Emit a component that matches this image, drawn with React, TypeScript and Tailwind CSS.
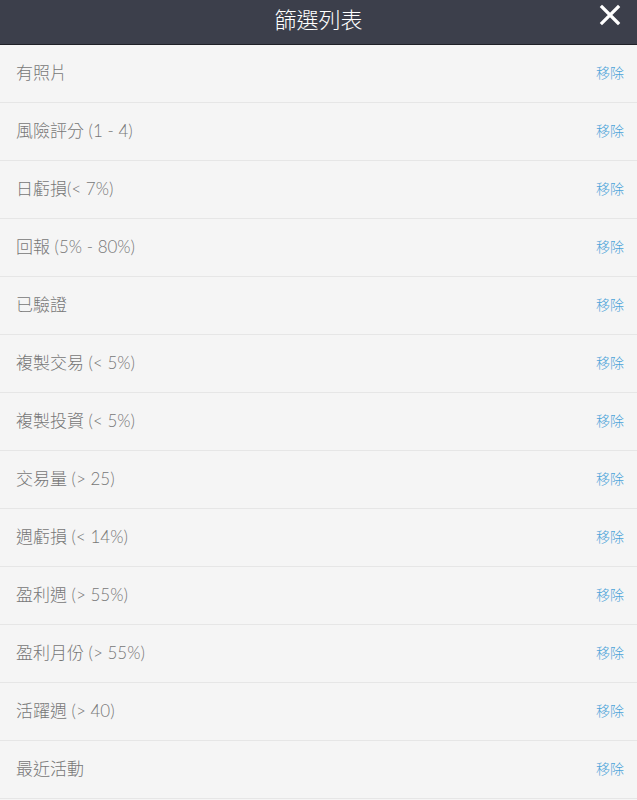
const filters = [
  '有照片',
  '風險評分 (1 - 4)',
  '日虧損(< 7%)',
  '回報 (5% - 80%)',
  '已驗證',
  '複製交易 (< 5%)',
  '複製投資 (< 5%)',
  '交易量 (> 25)',
  '週虧損 (< 14%)',
  '盈利週 (> 55%)',
  '盈利月份 (> 55%)',
  '活躍週 (> 40)',
  '最近活動',
]

export default function App() {
  return (
    <div
      className="w-[637px] h-[800px] overflow-hidden bg-[#f5f5f5] font-light"
      style={{ fontFamily: 'Lato, "Noto Sans CJK TC", sans-serif' }}
    >
      <div className="relative h-[45px] bg-[#3c3f4b] border-b border-[#1f2027] flex items-center justify-center">
        <h1 className="text-[22px] text-white font-light leading-none -mt-[4px]">篩選列表</h1>
        <button className="absolute right-[16px] top-[4px] w-[22px] h-[22px] text-white">
          <svg viewBox="0 0 22 22" className="w-[22px] h-[22px]" fill="none" stroke="currentColor" strokeWidth="3.2" strokeLinecap="square">
            <path d="M3 3 L19 19 M19 3 L3 19" />
          </svg>
        </button>
      </div>
      <ul>
        {filters.map((f) => (
          <li
            key={f}
            className="h-[58px] border-b border-[#e6e6e6] flex items-center justify-between pl-[16px] pr-[13px]"
          >
            <span className="text-[17px] text-[#777777] -mt-[2px]">{f}</span>
            <button className="text-[14px] text-[#4ba3d9] -mt-[2px]">移除</button>
          </li>
        ))}
      </ul>
    </div>
  )
}
